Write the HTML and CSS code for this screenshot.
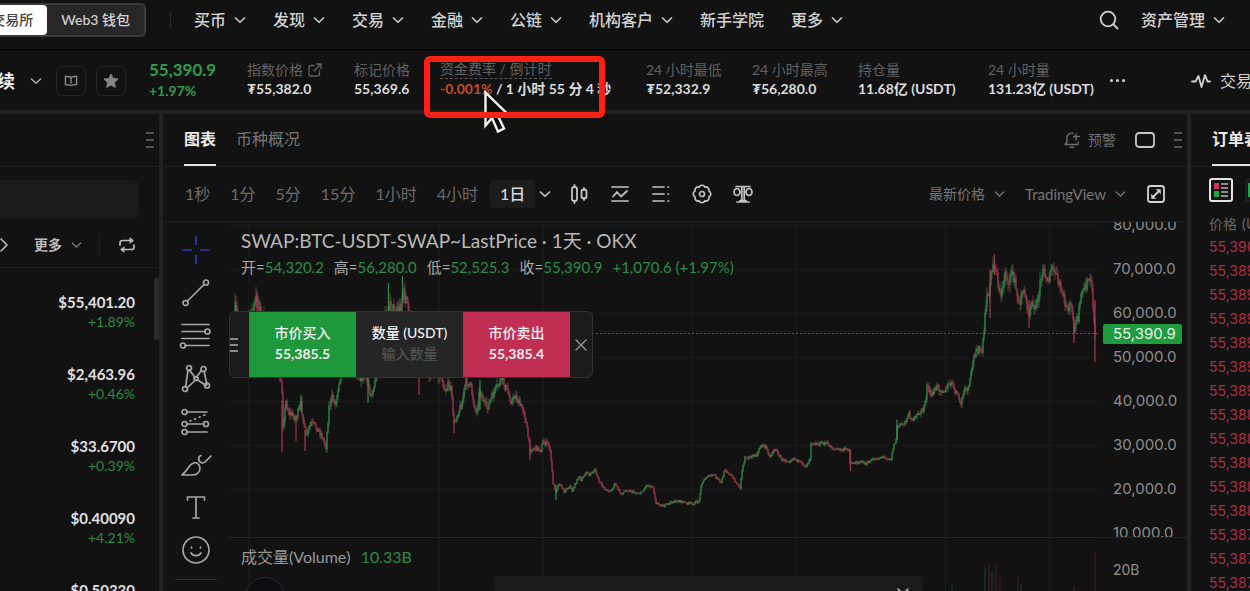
FILE: index.html
```html
<!DOCTYPE html>
<html lang="zh-CN">
<head>
<meta charset="utf-8">
<title>BTC-USDT 永续</title>
<meta name="viewport" content="width=device-width, initial-scale=1">
<link rel="stylesheet" href="styles.css">
</head>
<body>
<svg class="defs" aria-hidden="true">
  <symbol id="chev" viewBox="0 0 12 8"><path d="M1 1.5 6 6.3 11 1.5"/></symbol>
</svg>

<header class="topbar">
  <div class="mode">
    <button class="mode-item active">交易所</button>
    <button class="mode-item">Web3 钱包</button>
  </div>
  <span class="topbar-sep"></span>
  <nav class="nav">
    <button>买币<svg class="chev"><use href="#chev"/></svg></button>
    <button>发现<svg class="chev"><use href="#chev"/></svg></button>
    <button>交易<svg class="chev"><use href="#chev"/></svg></button>
    <button>金融<svg class="chev"><use href="#chev"/></svg></button>
    <button>公链<svg class="chev"><use href="#chev"/></svg></button>
    <button>机构客户<svg class="chev"><use href="#chev"/></svg></button>
    <a href="#academy">新手学院</a>
    <button>更多<svg class="chev"><use href="#chev"/></svg></button>
  </nav>
  <div class="account">
    <button aria-label="搜索"><svg class="line" width="20" height="20" viewBox="0 0 20 20" stroke-width="1.8"><circle cx="9" cy="9" r="7.3"/><path d="m14.5 14.5 4 4"/></svg></button>
    <button>资产管理<svg class="chev"><use href="#chev"/></svg></button>
  </div>
</header>

<section class="ticker">
  <div class="pair">
    <button class="pair-name" aria-label="BTCUSDT 永续"><span>续</span><svg class="chev"><use href="#chev"/></svg></button>
    <button class="square" aria-label="介绍"><svg class="line" width="14" height="12" viewBox="0 0 16 14" stroke-width="1.7"><path d="M8 3.2C7 2 5.500 1.500 1.500 1.500v9.500c3 0 5.500 0 6.500 1.500 1-1.500 3.500-1.500 6.500-1.500V1.500C10.500 1.500 9 2 8 3.200zM8 3.200v6"/></svg></button>
    <button class="square" aria-label="收藏"><svg width="16" height="16" viewBox="0 0 16 16"><path fill="#858585" stroke="#858585" stroke-linejoin="round" d="m8 1 2.100 4.500 4.900.6-3.600 3.400.9 4.900L8 12l-4.300 2.400.9-4.900L1 6.100l4.900-.6z"/></svg></button>
  </div>
  <dl class="stats">
    <div class="last"><dt>55,390.9</dt><dd>+1.97%</dd></div>
    <div><dt>指数价格 <svg class="line" width="14" height="14" viewBox="0 0 14 14" stroke-width="1.3"><path d="M6 2.500H3q-2 0-2 2V11q0 2 2 2h6.500q2 0 2-2V8M6 8l6.500-6.500M8.500 1H13v4.500"/></svg></dt><dd>₮55,382.0</dd></div>
    <div><dt>标记价格</dt><dd>55,369.6</dd></div>
    <div class="funding"><dt><span>资金费率 / 倒计时</span></dt><dd><em>-0.001%</em> / 1 小时 55 分 4 秒</dd></div>
    <div><dt>24 小时最低</dt><dd>₮52,332.9</dd></div>
    <div><dt>24 小时最高</dt><dd>₮56,280.0</dd></div>
    <div><dt>持仓量</dt><dd>11.68亿 (USDT)</dd></div>
    <div><dt>24 小时量</dt><dd>131.23亿 (USDT)</dd></div>
  </dl>
  <button class="dots" aria-label="更多数据"><i></i><i></i><i></i></button>
  <button class="trade-data"><svg class="line" width="20" height="16" viewBox="0 0 20 16" stroke-width="1.8"><path d="M1 8.500h3.500L7.500 3l3 11 3.500-12 2.500 6.500H19"/></svg><span>交易数据</span></button>
  <div class="highlight"></div>
  <svg class="cursor" width="28" height="46" viewBox="0 0 28 46"><path d="M2.500 2.500v33l6.500-7.500 6 13.500 6-3-6-12.500 10.500-1z" fill="#0c0c0c" stroke="#f5f5f5" stroke-width="2.400"/></svg>
</section>

<main class="workspace">
  <aside class="markets">
    <div class="markets-head"><span class="grip"><i></i><i></i><i></i></span></div>
    <div class="search"><input type="search" aria-label="搜索币种"></div>
    <div class="filters">
      <button class="prev" aria-label="下一组"><svg class="line" width="8" height="14" viewBox="0 0 8 14" stroke-width="1.600"><path d="m1 1 6 6-6 6"/></svg></button>
      <button class="more">更多<svg class="chev"><use href="#chev"/></svg></button>
      <span class="filters-sep"></span>
      <button class="swap" aria-label="切换"><svg class="line" width="18" height="16" viewBox="0 0 18 16" stroke-width="1.700"><path d="M2 8V6q0-2.500 2.500-2.500H14M16 8v2q0 2.500-2.500 2.500H4"/><path d="m12 .8 3.500 2.700L12 6.200zM6 9.800l-3.500 2.700L6 15.200z" fill="currentColor" stroke-width=".6"/></svg></button>
    </div>
    <ul class="market-list">
      <li><a href="#btc"><b>$55,401.20</b><span>+1.89%</span></a></li>
      <li><a href="#eth"><b>$2,463.96</b><span>+0.46%</span></a></li>
      <li><a href="#okb"><b>$33.6700</b><span>+0.39%</span></a></li>
      <li><a href="#matic"><b>$0.40090</b><span>+4.21%</span></a></li>
      <li><a href="#xrp"><b>$0.50330</b><span>+1.02%</span></a></li>
    </ul>
    <span class="scrollbar"></span>
  </aside>

  <section class="chart-panel">
    <div class="tabs">
      <button class="tab active">图表</button>
      <button class="tab">币种概况</button>
      <div class="tabs-right">
        <button class="alert"><svg class="line" width="18" height="18" viewBox="0 0 18 18" stroke-width="1.400"><path d="M10 2.200C5.500 1.500 4 4.500 4 7v4l-2 2.500h13V11M13 3v6M10.500 5.500h6M7 16.300h3.500"/></svg>预警</button>
        <button aria-label="布局"><svg class="line" width="20" height="16" viewBox="0 0 20 16" stroke-width="1.800"><rect x="1" y="1" width="18" height="14" rx="3"/></svg></button>
        <span class="grip"><i></i><i></i><i></i></span>
      </div>
    </div>

    <div class="toolbar">
      <div class="intervals">
        <button>1秒</button><button>1分</button><button>5分</button><button>15分</button><button>1小时</button><button>4小时</button><button class="active">1日</button>
      </div>
      <button class="interval-more" aria-label="更多周期"><svg class="chev"><use href="#chev"/></svg></button>
      <div class="chart-tools">
        <button aria-label="K线样式"><svg class="line" width="20" height="20" viewBox="0 0 20 20" stroke-width="1.800"><path d="M5.500 1v2M5.500 17v2M15 4v2M15 14v2"/><rect x="3" y="3" width="5" height="14" rx="2.300"/><rect x="12.500" y="5.500" width="5" height="9" rx="2.300"/></svg></button>
        <button aria-label="指标"><svg class="line" width="20" height="20" viewBox="0 0 20 20" stroke-width="1.700"><path d="M2 3h16M2 17h16M3 12.500 7 8l4 4.500L17 7"/></svg></button>
        <button aria-label="列表"><svg class="line" width="20" height="20" viewBox="0 0 20 20" stroke-width="1.700"><path d="M2 3h11M2 10h11M2 17h11M17 3h.5M17 10h.5M17 17h.5"/></svg></button>
        <button aria-label="设置"><svg class="line" width="20" height="20" viewBox="0 0 20 20" stroke-width="1.700"><path d="M16.900 12.900A3.200 3.200 0 0 1 12.900 16.900 3.200 3.200 0 0 1 7.100 16.900 3.200 3.200 0 0 1 3.100 12.900 3.200 3.200 0 0 1 3.100 7.100 3.200 3.200 0 0 1 7.100 3.100 3.200 3.200 0 0 1 12.900 3.100 3.200 3.200 0 0 1 16.900 7.100 3.200 3.200 0 0 1 16.900 12.900z"/><circle cx="10" cy="10" r="2.500"/></svg></button>
        <button aria-label="对比"><svg class="line" width="20" height="20" viewBox="0 0 20 20" stroke-width="1.700"><path d="M3 2.500h14M8.800 3v14M11.200 3v14M4 18h12M7 16.500h6"/><ellipse cx="4" cy="8" rx="3" ry="3.500"/><ellipse cx="16" cy="8" rx="3" ry="3.500"/></svg></button>
      </div>
      <div class="chart-source">
        <label class="pick"><select aria-label="价格类型"><option>最新价格</option></select><svg class="chev"><use href="#chev"/></svg></label>
        <label class="pick"><select aria-label="图表类型"><option>TradingView</option></select><svg class="chev"><use href="#chev"/></svg></label>
        <button aria-label="全屏"><svg class="line" width="20" height="20" viewBox="0 0 20 20" stroke-width="1.800"><rect x="2" y="2" width="16" height="16" rx="2.500"/><path d="m7 13 6-6"/><path d="M10.500 5.500h4v4zM5.500 10.500v4h4z" fill="currentColor" stroke-width=".5"/></svg></button>
      </div>
    </div>

    <div class="chart-body">
      <div class="draw">
        <button aria-label="十字线"><svg class="line cross" viewBox="0 0 34 34"><path d="M17 3v9M17 22v9M3 17h10M21 17h10"/></svg></button>
        <button aria-label="趋势线"><svg class="line" viewBox="0 0 34 34"><circle cx="6.500" cy="27" r="2.500"/><circle cx="27" cy="6.500" r="2.500"/><path d="M8.500 25 25 8.500"/></svg></button>
        <button aria-label="斐波那契"><svg class="line" viewBox="0 0 34 34"><path d="M3 5.500h27M3 12.500h23M3 19.500h27M6 26.500h24"/><circle cx="28.500" cy="12.500" r="2.500"/><circle cx="4" cy="26.500" r="2.500"/></svg></button>
        <button aria-label="形态"><svg class="line" viewBox="0 0 34 34"><path d="M9 8.500 6.500 25M10.500 8 16 15.500M22.500 8.500 17.500 15M25 9.500l3 13M8.500 25.500l7.500-7M18 17.500l9 6"/><circle cx="10" cy="6" r="2.500"/><circle cx="24.500" cy="7" r="2.500"/><circle cx="6" cy="27" r="2.500"/><circle cx="28" cy="23.500" r="2.500"/><circle cx="17" cy="16.500" r="2"/></svg></button>
        <button aria-label="预测"><svg class="line" viewBox="0 0 34 34"><path d="M8 7h20M8 19h17M8 27h20"/><path d="M11 16 28 9" stroke-dasharray="1 4"/><circle cx="5.500" cy="7" r="2.500"/><circle cx="5.500" cy="19" r="2.500"/><circle cx="27" cy="19" r="2.500"/><circle cx="5.500" cy="27" r="2.500"/></svg></button>
        <button aria-label="画笔"><svg class="line" viewBox="0 0 34 34"><path d="M3 27h10c5 0 8-3 8-7 0-3.500-3-6-6.500-5-5 1.500-5 7-11.500 12zM22 7.500c-3.500 1-3 7 1.500 7.500 2 0 2.500-1 3.500-2l5-5"/></svg></button>
        <button aria-label="文字"><svg class="line" viewBox="0 0 34 34"><path d="M8.500 9V6h17v3M17 6v21M14 27h6"/></svg></button>
        <button aria-label="表情"><svg class="line" viewBox="0 0 34 34"><circle cx="17" cy="16" r="13"/><path d="M12.500 13v1M21.500 13v1M12 19c2 3.500 8 3.500 10 0"/></svg></button>
        <span class="draw-sep"></span>
      </div>

      <div class="plot">
        <svg id="candles" viewBox="230 222 870 369" preserveAspectRatio="none" role="img" aria-label="BTC-USDT 日线"></svg>
        <div class="legend">
          <h1>SWAP:BTC-USDT-SWAP~LastPrice · 1天 · OKX</h1>
          <p><span>开=<b>54,320.2</b></span><span>高=<b>56,280.0</b></span><span>低=<b>52,525.3</b></span><span>收=<b>55,390.9</b></span><b>+1,070.6 (+1.97%)</b></p>
        </div>
        <form class="quick">
          <span class="grip"><i></i><i></i><i></i></span>
          <button type="button" class="buy"><span>市价买入</span><b>55,385.5</b></button>
          <label class="amount"><span>数量 (USDT)</span><input type="text" placeholder="输入数量"></label>
          <button type="button" class="sell"><span>市价卖出</span><b>55,385.4</b></button>
          <button type="button" class="close" aria-label="关闭"><svg class="line" width="12" height="12" viewBox="0 0 12 12" stroke-width="1.400"><path d="m1 1 10 10M11 1 1 11"/></svg></button>
        </form>
        <div class="volume-legend">成交量(Volume) <b>10.33B</b></div>
        <span class="brand"></span>
        <div class="toast"><svg class="line" width="12" height="12" viewBox="0 0 12 12" stroke-width="1.600"><path d="m1 1 10 10M11 1 1 11"/></svg></div>
      </div>

      <div class="axis">
        <ol class="prices">
          <li>80,000.0</li><li>70,000.0</li><li>60,000.0</li><li>50,000.0</li><li>40,000.0</li><li>30,000.0</li><li>20,000.0</li><li>10,000.0</li>
        </ol>
        <div class="volumes">20B</div>
        <span class="tag">55,390.9</span>
      </div>
    </div>
  </section>

  <aside class="book">
    <div class="book-tabs"><button class="tab active">订单表</button></div>
    <div class="book-modes">
      <button aria-label="买卖盘"><svg width="24" height="24" viewBox="0 0 24 24"><rect x="1" y="1" width="22" height="22" rx="2" fill="#161616" stroke="#e4e4e4" stroke-width="2"/><path fill="#c93456" d="M5 5h5v6H5z"/><path fill="#1fa64a" d="M5 13h5v6H5z"/><path fill="#8c8c8c" d="M12 5h7v2h-7zM12 9h7v2h-7zM12 13h7v2h-7zM12 17h7v2h-7z"/></svg></button>
      <button aria-label="买盘"><svg width="24" height="24" viewBox="0 0 24 24"><rect x="1" y="1" width="22" height="22" rx="2" fill="#161616" stroke="#2b2b2b" stroke-width="1"/><path fill="#1fa64a" d="M3 5h6v14H3z"/></svg></button>
    </div>
    <table>
      <thead><tr><th>价格 (USDT)</th></tr></thead>
      <tbody>
        <tr><td>55,390.9</td></tr><tr><td>55,389.9</td></tr><tr><td>55,389.7</td></tr><tr><td>55,389.5</td></tr><tr><td>55,389.4</td></tr>
        <tr><td>55,389.2</td></tr><tr><td>55,389.0</td></tr><tr><td>55,388.9</td></tr><tr><td>55,388.6</td></tr><tr><td>55,388.5</td></tr>
        <tr><td>55,388.3</td></tr><tr><td>55,388.0</td></tr><tr><td>55,387.8</td></tr><tr><td>55,387.5</td></tr><tr><td>55,387.1</td></tr>
      </tbody>
    </table>
  </aside>
</main>
<script src="chart.js"></script>
</body>
</html>
```

FILE: styles.css
```css
* { box-sizing: border-box; }
body {
  margin: 0;
  height: 100vh;
  display: flex;
  flex-direction: column;
  overflow: hidden;
  background: #121212;
  color: #d2d2d2;
  font: 14px/20px Lato, "Noto Sans CJK SC", sans-serif;
}
button, input, select { font: inherit; color: inherit; background: none; border: 0; padding: 0; margin: 0; outline: 0; }
button { display: inline-flex; align-items: center; justify-content: center; white-space: nowrap; flex: none; }
a { color: inherit; text-decoration: none; }
ul, ol, dl, dd, p, h1 { margin: 0; padding: 0; list-style: none; font-weight: 400; }
svg { flex: none; display: block; }
.defs { position: absolute; width: 0; height: 0; }
.chev { width: 12px; height: 8px; fill: none; stroke: currentColor; stroke-width: 1.5; }
.line { fill: none; stroke: currentColor; stroke-linecap: round; stroke-linejoin: round; }
.grip { display: flex; flex-direction: column; gap: 5px; width: 8px; }
.grip i { height: 2px; background: #555; }

/* top navigation */
.topbar { flex: none; display: flex; align-items: center; height: 51px; padding: 0 25px 10px 0; border-bottom: 2px solid #050505; font-size: 16px; }
.mode { display: flex; justify-content: flex-end; width: 146px; height: 34px; border: 2px solid #3a3a3a; border-left: 0; border-radius: 0 5px 5px 0; background: #272727; font-size: 14px; font-weight: 500; overflow: hidden; }
.mode-item { padding: 0 14px; }
.mode-item.active { background: #fff; color: #444; border-radius: 0 4px 4px 0; }
.topbar-sep { width: 1px; height: 16px; margin: 0 23px 0 24px; background: #2c2c2c; }
.nav { display: flex; gap: 27px; font-weight: 500; }
.nav button, .account button { gap: 8px; }
.account { display: flex; align-items: center; gap: 22px; margin-left: auto; font-weight: 500; }

/* instrument statistics */
.ticker { position: relative; flex: none; display: flex; align-items: center; height: 59px; }
.pair { display: flex; align-items: center; gap: 10px; width: 149px; flex: none; }
.pair-name { gap: 15px; width: 46px; justify-content: flex-end; padding-right: 4px; font-size: 18px; font-weight: 700; color: #f0f0f0; }
.pair-name .chev { stroke: #aaa; }
.square { width: 30px; height: 30px; border: 1px solid #262626; border-radius: 6px; color: #858585; }
.stats { display: grid; grid-template-columns: 98px 107px 86px 206px 106px 106px 130px 122px; flex: none; white-space: nowrap; }
.stats dt { display: flex; align-items: center; gap: 5px; height: 20px; color: #626262; }
.stats dd { height: 18px; line-height: 18px; font-weight: 700; color: #dcdcdc; }
.stats .last dt { font-size: 17px; font-weight: 700; color: #2c9e4b; }
.stats .last dd { color: #2c9e4b; height: 22px; line-height: 22px; }
.funding dt span { border-bottom: 1px dashed #5a5a5a; line-height: 18px; }
.funding em { font-style: normal; color: #c4501f; }
.dots { gap: 3px; width: 15px; }
.dots i { width: 3px; height: 3px; border-radius: 50%; background: #d8d8d8; }
.trade-data { gap: 9px; margin-left: auto; width: 59px; justify-content: flex-start; overflow: hidden; font-size: 16px; }
.highlight { position: absolute; left: 424px; top: 5px; width: 181px; height: 62px; border: 6px solid #fc2115; border-radius: 6px; z-index: 2; }
.cursor { position: absolute; left: 483px; top: 39px; z-index: 1; }

/* workspace columns */
.workspace { flex: 1; min-height: 0; display: grid; grid-template-columns: 159px minmax(0, 1fr) 59px; grid-template-rows: minmax(0, 1fr); gap: 4px; padding-top: 4px; background: #222; }
.workspace > * { background: #121212; overflow: hidden; min-width: 0; }

.markets { position: relative; }
.markets-head { display: flex; align-items: center; justify-content: flex-end; height: 53px; padding-right: 5px; border-bottom: 1px solid #1f1f1f; }
.search { padding: 13px 20px 0 0; }
.search input { display: block; width: 100%; height: 39px; background: #1a1a1a; border-radius: 0 6px 6px 0; }
.filters { display: flex; align-items: center; height: 49px; padding-top: 4px; border-bottom: 1px solid #1f1f1f; color: #bbb; }
.more { gap: 9px; margin-left: 26px; font-weight: 700; }
.more .chev { width: 11px; stroke: #777; }
.filters-sep { width: 1px; height: 22px; margin: 0 18px 0 17px; background: #232323; }
.market-list li { height: 72px; }
.market-list { padding: 25px 24px 0 0; }
.market-list a { display: flex; flex-direction: column; align-items: flex-end; line-height: 19px; }
.market-list b { color: #e0e0e0; font-size: 15px; }
.market-list span { color: #2c8c45; font-size: 14px; }
.scrollbar { position: absolute; right: 0; top: 164px; width: 5px; height: 62px; background: #2d2d2d; border-radius: 2px; }

/* chart */
.chart-panel { display: flex; flex-direction: column; }
.tabs { flex: none; display: flex; gap: 20px; height: 53px; padding: 0 5px 0 21px; border-bottom: 1px solid #1f1f1f; }
.tab { font-size: 16px; color: #777; border-bottom: 2px solid transparent; }
.tab.active { color: #ececec; font-weight: 700; border-color: #e2e2e2; }
.tabs-right { display: flex; align-items: center; gap: 19px; margin-left: auto; color: #c8c8c8; }
.alert { gap: 7px; color: #6e6e6e; }
.toolbar { flex: none; display: flex; align-items: center; height: 55px; padding: 0 21px 0 14px; border-bottom: 1px solid #1f1f1f; color: #6c6c6c; }
.intervals { display: flex; gap: 4px; font-size: 16px; }
.intervals button { height: 28px; padding: 0 8px; border-radius: 3px; }
.intervals .active { background: #1c1c1c; color: #d8d8d8; font-weight: 500; padding: 0 10px; }
.interval-more { color: #ccc; padding-left: 4px; }
.chart-tools { display: flex; gap: 21px; margin-left: 18px; color: #c4c4c4; }
.chart-source { display: flex; align-items: center; gap: 20px; margin-left: auto; }
.chart-source button { color: #d4d4d4; }
.pick { display: flex; align-items: center; gap: 9px; color: #757575; }
.pick .chev { width: 11px; }
.pick select { appearance: none; }
.pick:nth-child(2) select { font-size: 15px; }

.chart-body { flex: 1; min-height: 0; display: grid; grid-template-columns: 66px minmax(0, 1fr) 88px; grid-template-rows: minmax(0, 1fr); }
.draw { display: flex; flex-direction: column; align-items: center; gap: 9px; padding-top: 11px; color: #a6a6a6; overflow: hidden; }
.draw svg { width: 34px; height: 34px; stroke-width: 1.7; }
.draw .cross { color: #2b3bb5; stroke-linecap: butt; }
.draw-sep { flex: none; width: 42px; height: 1px; background: #333; margin-top: 2px; }
.plot { position: relative; overflow: hidden; }
#candles { position: absolute; inset: 0; width: 100%; height: 100%; }
.legend { position: absolute; left: 12px; top: 7px; white-space: nowrap; }
.legend h1 { font-size: 19px; line-height: 24px; color: #b8b8b8; }
.legend p { display: flex; gap: 10px; margin-top: 4px; font-size: 15px; color: #aaa; }
.legend b, .volume-legend b { font-weight: 400; color: #2c8c45; }
.quick { position: absolute; left: 0; top: 89px; display: flex; height: 67px; border: 1px solid #333; border-radius: 6px; background: #1b1b1b; }
.quick .grip { width: 19px; padding-right: 11px; justify-content: center; gap: 4px; }
.quick .grip i { background: #8a8a8a; }
.buy, .sell, .amount { display: flex; flex-direction: column; align-items: center; justify-content: center; width: 107px; padding-bottom: 3px; color: #f2f2f2; line-height: 21px; font-weight: 500; }
.buy { background: #1f973b; }
.sell { background: #c02e52; }
.amount { background: #252525; }
.amount input { width: 100%; text-align: center; line-height: 21px; }
.amount input::placeholder { color: #525252; opacity: 1; }
.close { width: 22px; color: #999; }
.volume-legend { position: absolute; left: 12px; top: 325px; font-size: 16px; color: #999; }
.volume-legend b { margin-left: 6px; }
.brand { position: absolute; left: 16px; top: 355px; width: 40px; height: 40px; border-radius: 50%; border: 1px solid #2b2b2b; background: #0d0d0f; }
.toast { position: absolute; left: 266px; right: 176px; bottom: 0; height: 15px; padding: 12px 14px 0; display: flex; justify-content: flex-end; background: #1a1a1a; border-radius: 4px 4px 0 0; overflow: hidden; color: #bbb; }
.axis { position: relative; padding-left: 14px; font: 15px/44px Inter, sans-serif; color: #8e8e8e; overflow: hidden; }
.prices { height: 315px; overflow: hidden; display: flex; flex-direction: column; justify-content: flex-end; }
.prices li { flex: none; height: 44px; }
.prices li:last-child { height: 26px; }
.volumes { height: 54px; padding-top: 10px; margin-left: -14px; padding-left: 14px; border-top: 1px solid #222; font-size: 14px; }
.tag { position: absolute; left: 4px; top: 102px; width: 79px; height: 20px; padding-left: 10px; line-height: 20px; border-radius: 2px; background: #1f9a3e; color: #e4f5e6; }

/* order book */
.book-tabs { display: flex; height: 53px; padding-left: 21px; border-bottom: 1px solid #1f1f1f; }
.book-modes { display: flex; gap: 12px; padding: 11px 0 0 18px; }
.book table { margin: 11px 0 0 18px; border-collapse: collapse; white-space: nowrap; font: 14px/24px Inter, "Noto Sans CJK SC", sans-serif; color: #ad2f4b; }
.book th { padding: 0; font-weight: 400; text-align: left; color: #666; line-height: 22px; }
.book td { padding: 0; height: 24px; }
```

FILE: chart.js
```js
// Closing path of the daily series, as x,y pairs in plot units.
const path = `236,310 245,330 256,305 258,296 262,315 270,340 280,372 283,392 284,425 287,402 290,413 297,418 302,405
305,423 307,437 312,423 317,427 322,434 327,447 328,433 330,407 333,398 337,403 340,380 348,350 360,376 367,378 372,393 375,390 377,374
387,312 390,306 395,310 402,308 404,293 407,299 410,314 420,350 430,372 443,377 445,392 448,385 452,390 455,423 460,410
463,403 467,380 472,388 477,413 481,390 485,403 488,408 495,393 503,378 508,391 513,402 516,395 522,407 525,410
528,430 531,450 537,448 542,450 544,442 550,445 552,460 554,483 557,491 560,483 565,491 571,486 573,491 580,476
582,481 587,472 590,475 596,470 600,482 607,490 612,491 616,484 622,494 628,490 637,493 642,493 648,485 654,487
657,503 665,506 673,502 680,501 687,503 693,504 700,501 702,485 707,477 715,475 722,483 726,469 733,477 741,488
743,470 746,457 752,457 758,455 762,445 767,447 771,457 775,449 778,452 783,460 790,461 795,458 800,462 807,466
811,458 812,442 818,444 827,443 835,449 843,450 850,449 851,463 857,463 861,461 867,464 873,460 883,457 892,459
894,448 897,440 898,427 905,423 910,415 915,420 920,413 924,410 927,397 928,387 932,395 938,387 945,391 952,383
957,392 962,404 965,391 970,388 973,367 977,348 983,352 985,333 987,303 990,290 993,270 996,263 999,283 1002,298
1006,272 1010,283 1014,270 1017,290 1020,306 1023,290 1027,300 1030,311 1033,300 1037,309 1040,290 1043,273
1047,273 1050,280 1054,267 1058,280 1063,292 1067,307 1072,307 1075,328 1079,318 1083,293 1087,285 1091,278
1093,293 1096,333`.trim().split(/\s+/).map(p => p.split(',').map(Number));

let seed = 7;
const rand = () => (seed = (seed * 16807) % 2147483647) / 2147483647;

const at = x => {
  let i = 1;
  while (i < path.length - 1 && path[i][0] < x) i++;
  const [x0, y0] = path[i - 1], [x1, y1] = path[i];
  return y0 + (y1 - y0) * (x - x0) / (x1 - x0);
};

const line = (x1, y1, x2, y2, color, extra = '') =>
  `<line x1="${x1}" y1="${y1.toFixed(1)}" x2="${x2}" y2="${y2.toFixed(1)}" stroke="${color}" ${extra}/>`;

let out = '';
for (let y = 225.5; y < 530; y += 44) out += line(230, y, 1100, y, '#1a1a1a');
for (const x of [249.5, 440.5, 544.5, 693.5, 797.5, 946.5, 1050.5]) out += line(x, 222, x, 591, '#191919');
out += line(230, 537.5, 1100, 537.5, '#272727');
out += line(593, 333.5, 1100, 333.5, '#2f6a4b', 'stroke-dasharray="2 2"');

// Candles: swings widen with the price level.
const up = '#369a50', down = '#b03e54';
let prev = at(236);
for (let x = 236; x <= 1096; x++) {
  const base = at(x);
  const swing = Math.max(2.4, (515 - base) / (x < 560 ? 14 : 20));
  const y = base + (rand() - 0.5) * swing;
  const color = y < prev ? up : down;
  const top = Math.min(y, prev), bottom = Math.max(y, prev);
  out += line(x, top - rand() * swing * 0.7, x, bottom + rand() * swing * 0.7, color, 'stroke-width="0.8" opacity="0.7"');
  out += line(x, top - 0.4, x, bottom + 0.4, color, 'stroke-width="1.1" opacity="0.85"');
  prev = y;
}

// Isolated long wicks: x, top, bottom.
for (const [x, a, b, c] of [
  [237, 305, 312, up], [258, 292, 312, down], [283, 400, 452, down], [306, 430, 451, down], [297, 415, 441, down],
  [302, 395, 412, up], [389.5, 283, 310, up], [403.5, 276, 300, up], [420, 370, 395, down], [369, 378, 403, up],
  [455, 420, 433, down], [481, 380, 410, up], [531, 445, 460, down], [557, 485, 500, up], [851.5, 450, 471, down],
  [898, 420, 440, up], [1030, 300, 328, down], [991, 270, 318, down], [995.5, 254, 275, down], [1075, 322, 343, down],
  [1096, 300, 362, down]
]) out += line(x, a, x, b, c, 'stroke-width="1.3" opacity="0.85"');

for (const [x, h, c] of [[953, 7, up], [986, 24, up], [990, 27, down], [993, 20, up], [997, 27, down], [1001, 14, down], [1019, 15, down], [1022, 8, up], [1075, 4, down], [1096, 39, down]])
  out += line(x, 591 - h, x, 591, c, 'opacity="0.35"');

document.getElementById('candles').innerHTML = out;
```
